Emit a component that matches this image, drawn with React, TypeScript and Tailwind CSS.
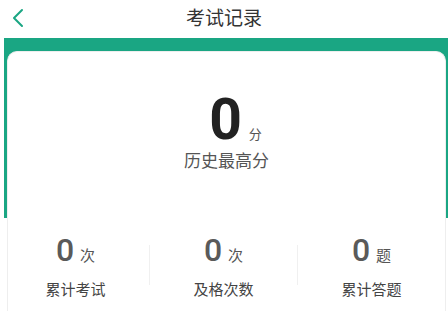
import React from 'react';

const cjk = { fontFamily: '"Noto Sans CJK SC", "Noto Sans", sans-serif' };
const num = { fontFamily: 'Roboto, "Liberation Sans", sans-serif' };

function Stat({ value, unit, label }: { value: number; unit: string; label: string }) {
  return (
    <div className="w-[150px] flex flex-col items-center">
      <div className="flex items-baseline">
        <span className="text-[32px] leading-none font-medium text-[#5a5a5a]" style={num}>{value}</span>
        <span className="ml-[6px] text-[15px] leading-none text-[#555]" style={cjk}>{unit}</span>
      </div>
      <div className="mt-[15px] text-[15px] leading-none text-[#444]" style={cjk}>{label}</div>
    </div>
  );
}

export default function App() {
  return (
    <div className="w-[448px] h-[311px] bg-white overflow-hidden relative">
      {/* header */}
      <div className="h-[38px] flex items-center justify-center relative">
        <button className="absolute left-[10px] top-[8px] text-[#1aa683]">
          <svg width="16" height="20" viewBox="0 0 16 20" fill="none" stroke="currentColor" strokeWidth={2} strokeLinecap="round" strokeLinejoin="round">
            <path d="M12 2 L4 10 L12 18" />
          </svg>
        </button>
        <h1 className="text-[19px] leading-none text-[#333] -mt-[6px]" style={cjk}>考试记录</h1>
      </div>

      {/* green band + card */}
      <div className="ml-[4px] h-[180px] bg-[#1aa683] pt-[13px] pl-[3px]">
        <div className="w-[439px] h-[300px] bg-white rounded-t-[10px] border border-[#eeeeee] border-b-0">
          <div className="pt-[43px] flex justify-center items-baseline pl-[18px]">
            <span className="text-[57px] leading-[50px] font-bold text-[#222]" style={num}>0</span>
            <span className="ml-[7px] text-[13px] leading-none text-[#555]" style={cjk}>分</span>
          </div>
          <div className="mt-[6px] text-center text-[17px] leading-none text-[#555]" style={cjk}>历史最高分</div>

          <div className="mt-[66px] -ml-[6px] flex items-center">
            <Stat value={0} unit="次" label="累计考试" />
            <div className="w-px h-[40px] bg-[#f0f0f0]" />
            <Stat value={0} unit="次" label="及格次数" />
            <div className="w-px h-[40px] bg-[#f0f0f0]" />
            <Stat value={0} unit="题" label="累计答题" />
          </div>
        </div>
      </div>
    </div>
  );
}
